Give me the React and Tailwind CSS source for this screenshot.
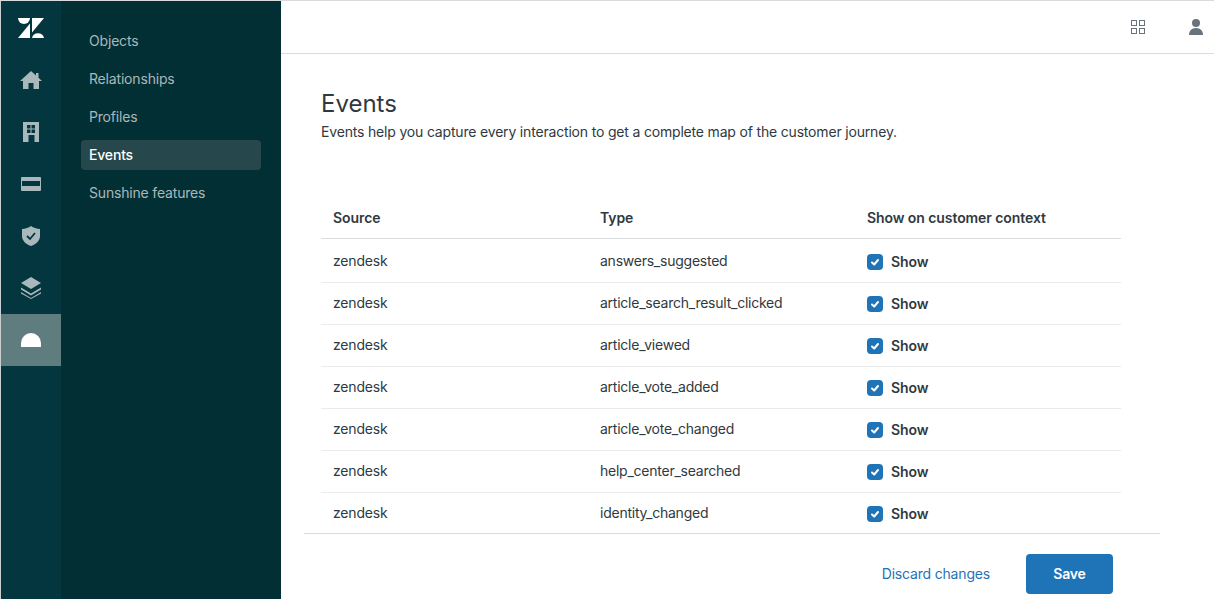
const navItems = ["Objects", "Relationships", "Profiles", "Events", "Sunshine features"];

const rows = [
  "answers_suggested",
  "article_search_result_clicked",
  "article_viewed",
  "article_vote_added",
  "article_vote_changed",
  "help_center_searched",
  "identity_changed",
];

function Logo() {
  return (
    <svg width="26" height="20" viewBox="0 0 26 20" fill="#fff">
      <path d="M12 5.500V20H0z" />
      <path d="M12 0A6 6 0 0 1 0 0z" />
      <path d="M14 20A6.200 6.200 0 0 1 26 20z" />
      <path d="M14 14.500V0h12z" />
    </svg>
  );
}

function HomeIcon() {
  return (
    <svg width="22" height="18" viewBox="0 0 22 18" fill="#a9b8bb">
      <path d="M11 0 16 4.500V2h2.500v4.800L22 10h-3v8h-5.500v-6h-5v6H3v-8H0z" />
    </svg>
  );
}

function BuildingIcon() {
  return (
    <svg width="16" height="20" viewBox="0 0 16 20" fill="#a9b8bb">
      <path
        fillRule="evenodd"
        d="M0 0h16v20h-4.500v-7h-6v7H0zM4 3v3.500h3.500V3zm4.500 0v3.500H12V3zM4 7.500V11h3.500V7.500zm4.500 0V11H12V7.500z"
      />
    </svg>
  );
}

function CardIcon() {
  return (
    <svg width="20" height="14" viewBox="0 0 20 14" fill="#a9b8bb">
      <path
        fillRule="evenodd"
        d="M1 0h18a1 1 0 0 1 1 1v12a1 1 0 0 1-1 1H1a1 1 0 0 1-1-1V1a1 1 0 0 1 1-1zM1 4v5h18V4z"
      />
    </svg>
  );
}

function ShieldIcon() {
  return (
    <svg width="18" height="20" viewBox="0 0 18 20">
      <path fill="#a9b8bb" d="M9 0c2.500 1.700 5.500 2.700 9 3v7c0 4.500-3.500 8-9 10-5.500-2-9-5.500-9-10V3c3.500-.3 6.500-1.300 9-3z" />
      <path fill="none" stroke="#03363d" strokeWidth="1.800" d="m5 10 3 3 5-6" />
    </svg>
  );
}

function StackIcon() {
  return (
    <svg width="20" height="22" viewBox="0 0 20 22" fill="#a9b8bb">
      <path d="M10 0 20 6 10 12 0 6z" />
      <path d="M0 10.500 10 16.500 20 10.500V12.500L10 18.500 0 12.500z" />
      <path d="M0 15 10 21 20 15V16.500L10 22 0 16.500z" />
    </svg>
  );
}

function Dome() {
  return <div className="w-5 h-[14px] bg-white rounded-t-full" />;
}

function RailItem({ children, active }) {
  return (
    <div className={`h-[52px] flex items-center justify-center ${active ? "bg-[#5f7c7f]" : ""}`}>
      {children}
    </div>
  );
}

function Check() {
  return (
    <span className="w-4 h-4 rounded-[4px] bg-[#1f73b7] flex items-center justify-center">
      <svg width="10" height="10" viewBox="0 0 10 10" fill="none" stroke="#fff" strokeWidth="2" strokeLinecap="round" strokeLinejoin="round">
        <path d="M2 5.500 4.200 7.500 8 3" />
      </svg>
    </span>
  );
}

export default function App() {
  return (
    <div className="h-[599px] w-[1214px] overflow-hidden flex flex-col bg-white font-['Inter',sans-serif] text-sm tracking-[-0.18px] text-[#2f3941]">
      <div className="flex-1 min-h-0 flex border-t border-[#d8dcde]">
        {/* rail */}
        <div className="w-[61px] bg-[#03363f] shrink-0 border-l border-[#c9cfd1]">
          <div className="h-[53px] flex items-center justify-center">
            <Logo />
          </div>
          <RailItem><HomeIcon /></RailItem>
          <RailItem><BuildingIcon /></RailItem>
          <RailItem><CardIcon /></RailItem>
          <RailItem><ShieldIcon /></RailItem>
          <RailItem><StackIcon /></RailItem>
          <RailItem active><Dome /></RailItem>
        </div>

        {/* subnav */}
        <div className="w-[220px] shrink-0 bg-[#022f34] pt-[25px] px-5">
          {navItems.map(item => (
            <div
              key={item}
              className={`h-[30px] mb-2 px-2 flex items-center rounded-[4px] ${
                item === "Events" ? "bg-[#26474c] text-white font-medium" : "text-[#a9b8bb]"
              }`}
            >
              {item}
            </div>
          ))}
        </div>

        {/* main */}
        <div className="flex-1 min-w-0 flex flex-col">
          <div className="h-[53px] shrink-0 border-b border-[#d8dcde] flex items-center justify-end pr-[11px] gap-11">
            <svg width="14" height="14" viewBox="0 0 14 14" fill="none" stroke="#68737d">
              <rect x="0.500" y="0.500" width="5" height="5" />
              <rect x="8.500" y="0.500" width="5" height="5" />
              <rect x="0.500" y="8.500" width="5" height="5" />
              <rect x="8.500" y="8.500" width="5" height="5" />
            </svg>
            <svg width="14" height="16" viewBox="0 0 14 16" fill="#68737d">
              <circle cx="7" cy="4" r="4" />
              <path d="M0 16c0-4 2.500-7 7-7s7 3 7 7z" />
            </svg>
          </div>

          <div className="flex-1 min-h-0 overflow-hidden pl-10 pt-[34px]">
            <h1 className="text-[24px] leading-8 font-normal tracking-normal">Events</h1>
            <p className="leading-5 mt-0.5">
              Events help you capture every interaction to get a complete map of the customer journey.
            </p>
            <table className="w-[800px] mt-14 table-fixed border-collapse">
              <thead>
                <tr className="h-10 border-b border-[#d8dcde] text-left tracking-[-0.08px]">
                  <th className="w-[267px] px-3 font-semibold">Source</th>
                  <th className="w-[267px] px-3 font-semibold">Type</th>
                  <th className="px-3 font-semibold">Show on customer context</th>
                </tr>
              </thead>
              <tbody>
                {rows.map((type, i) => (
                  <tr key={type} className={`border-b border-[#e9ebed] ${i === 0 ? "h-11" : "h-[42px]"}`}>
                    <td className={`px-3 ${i === 0 ? "pt-0.5" : ""}`}>zendesk</td>
                    <td className={`px-3 tracking-[-0.24px] ${i === 0 ? "pt-0.5" : ""}`}>{type}</td>
                    <td className={`px-3 ${i === 0 ? "pt-0.5" : ""}`}>
                      <label className="flex items-center gap-2 font-semibold pt-0.5 tracking-[-0.08px]">
                        <Check />
                        Show
                      </label>
                    </td>
                  </tr>
                ))}
              </tbody>
            </table>
          </div>

          <div className="h-[66px] shrink-0 ml-[23px] w-[856px] border-t border-[#d8dcde] flex items-start justify-end pr-[47px] pt-5 gap-9">
            <a className="text-[#1f73b7] leading-10">Discard changes</a>
            <button className="w-[87px] h-10 rounded-[4px] bg-[#1f73b7] text-white font-semibold">Save</button>
          </div>
        </div>
      </div>
    </div>
  );
}
